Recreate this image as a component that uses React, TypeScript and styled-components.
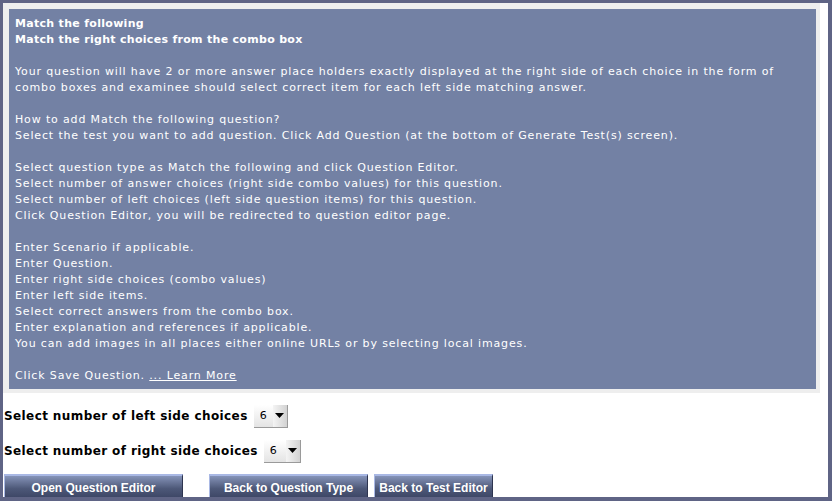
import React, { useState } from "react";
import styled, { createGlobalStyle } from "styled-components";

/** ===========================================================================
 * Match the following - question type help screen
 * ============================================================================
 */

const GlobalStyle = createGlobalStyle`
  html, body {
    margin: 0;
    padding: 0;
    background: #ffffff;
  }
`;

const HELP_STEPS: string[][] = [
  [
    "Your question will have 2 or more answer place holders exactly displayed at the right side of each choice in the form of",
    "combo boxes and examinee should select correct item for each left side matching answer.",
  ],
  [
    "How to add Match the following question?",
    "Select the test you want to add question. Click Add Question (at the bottom of Generate Test(s) screen).",
  ],
  [
    "Select question type as Match the following and click Question Editor.",
    "Select number of answer choices (right side combo values) for this question.",
    "Select number of left choices (left side question items) for this question.",
    "Click Question Editor, you will be redirected to question editor page.",
  ],
  [
    "Enter Scenario if applicable.",
    "Enter Question.",
    "Enter right side choices (combo values)",
    "Enter left side items.",
    "Select correct answers from the combo box.",
    "Enter explanation and references if applicable.",
    "You can add images in all places either online URLs or by selecting local images.",
  ],
];

const CHOICE_COUNTS = [2, 3, 4, 5, 6, 7, 8, 9, 10];

const App: React.FC = () => {
  const [leftCount, setLeftCount] = useState(6);
  const [rightCount, setRightCount] = useState(6);

  return (
    <>
      <GlobalStyle />
      <Frame>
        <HelpBox>
          <HelpPanel>
            <HelpTitle>
              Match the following
              <br />
              Match the right choices from the combo box
            </HelpTitle>
            {HELP_STEPS.map((lines, i) => (
              <HelpPara key={i}>
                {lines.map((line, j) => (
                  <React.Fragment key={j}>
                    {j > 0 && <br />}
                    {line}
                  </React.Fragment>
                ))}
              </HelpPara>
            ))}
            <HelpPara>
              Click Save Question. <LearnMore href="#">... Learn More</LearnMore>
            </HelpPara>
          </HelpPanel>
        </HelpBox>

        <ChoiceRow $top={11}>
          <ChoiceLabel>Select number of left side choices</ChoiceLabel>
          <Combo value={leftCount} width={34} onChange={setLeftCount} />
        </ChoiceRow>
        <ChoiceRow $top={11}>
          <ChoiceLabel>Select number of right side choices</ChoiceLabel>
          <Combo value={rightCount} width={37} onChange={setRightCount} />
        </ChoiceRow>

        <ButtonBar>
          <NavButton $width={179}>Open Question Editor</NavButton>
          <NavButton $width={159} $gap={26}>
            Back to Question Type
          </NavButton>
          <NavButton $width={119} $gap={6}>
            Back to Test Editor
          </NavButton>
        </ButtonBar>
      </Frame>
    </>
  );
};

/**
 * Old-style combo box: a select with a gray arrow button drawn over it.
 */
const Combo = (props: {
  value: number;
  width: number;
  onChange: (v: number) => void;
}) => {
  const { value, width, onChange } = props;
  return (
    <ComboWrap style={{ width }}>
      <ComboSelect
        value={value}
        onChange={(e) => onChange(Number(e.target.value))}
      >
        {CHOICE_COUNTS.map((n) => (
          <option key={n} value={n}>
            {n}
          </option>
        ))}
      </ComboSelect>
      <ComboArrow>
        <svg width="9" height="5" viewBox="0 0 9 5">
          <path d="M0 0 L9 0 L4.5 5 Z" fill="#000" />
        </svg>
      </ComboArrow>
    </ComboWrap>
  );
};

/** ===========================================================================
 * Styled Components
 * ============================================================================
 */

const Frame = styled.div`
  box-sizing: border-box;
  width: 832px;
  height: 501px;
  overflow: hidden;
  background: #ffffff;
  border-style: solid;
  border-color: #5f6485;
  border-width: 3px 4px 4px 3px;
  padding-left: 1px;
`;

const HelpBox = styled.div`
  margin-right: 8px;
  margin-left: -1px;
  padding: 6px 4px 4px 6px;
  background: #eeeeee;
`;

const HelpPanel = styled.div`
  background: #7381a4;
  padding: 7px 6px 5px 6px;
  color: #ffffff;
  font-family: "DejaVu Sans", Verdana, sans-serif;
  font-size: 11px;
  line-height: 16px;
  letter-spacing: 0.85px;
  white-space: nowrap;
`;

const HelpTitle = styled.div`
  font-weight: bold;
  letter-spacing: 0.3px;
  margin-bottom: 16px;
`;

const HelpPara = styled.div`
  margin-bottom: 16px;

  &:last-child {
    margin-bottom: 0;
  }
`;

const LearnMore = styled.a`
  color: #ffffff;
  text-decoration: underline;
`;

const ChoiceRow = styled.div<{ $top: number }>`
  display: flex;
  align-items: center;
  gap: 6px;
  margin-top: ${(p) => p.$top}px;
  height: 24px;
`;

const ChoiceLabel = styled.span`
  font-family: "DejaVu Sans", Verdana, sans-serif;
  font-size: 12px;
  font-weight: bold;
  letter-spacing: 0.4px;
  color: #000000;
`;

const ComboWrap = styled.span`
  position: relative;
  display: inline-block;
  height: 23px;
`;

const ComboSelect = styled.select`
  appearance: none;
  box-sizing: border-box;
  width: 100%;
  height: 100%;
  margin: 0;
  padding: 0 0 0 6px;
  border: none;
  border-right: 1px solid #9a9a9a;
  border-bottom: 1px solid #9a9a9a;
  border-radius: 0;
  background: linear-gradient(#ffffff, #e4e4e4);
  font-family: "DejaVu Sans", Verdana, sans-serif;
  font-size: 11px;
  color: #000000;
  outline: none;
`;

const ComboArrow = styled.span`
  position: absolute;
  top: 0;
  right: 1px;
  bottom: 1px;
  width: 14px;
  display: flex;
  align-items: center;
  justify-content: center;
  background: linear-gradient(90deg, #f4f4f4, #d2d2d2);
  pointer-events: none;
`;

const ButtonBar = styled.div`
  display: flex;
  margin-top: 11px;
`;

const NavButton = styled.button<{ $width: number; $gap?: number }>`
  box-sizing: border-box;
  width: ${(p) => p.$width}px;
  height: 25px;
  margin: 0 0 0 ${(p) => p.$gap ?? 0}px;
  padding: 0;
  border: none;
  border-top: 2px solid #a9b8e4;
  border-left: 1px solid #a9b8e4;
  border-right: 1px solid #2e3550;
  background: linear-gradient(#8593b8, #4d5878 55%, #3b4463);
  color: #ffffff;
  font-family: "Liberation Sans", Arial, sans-serif;
  font-size: 12px;
  font-weight: bold;
  cursor: pointer;
`;

/** ===========================================================================
 * Export
 * ============================================================================
 */

export default App;
